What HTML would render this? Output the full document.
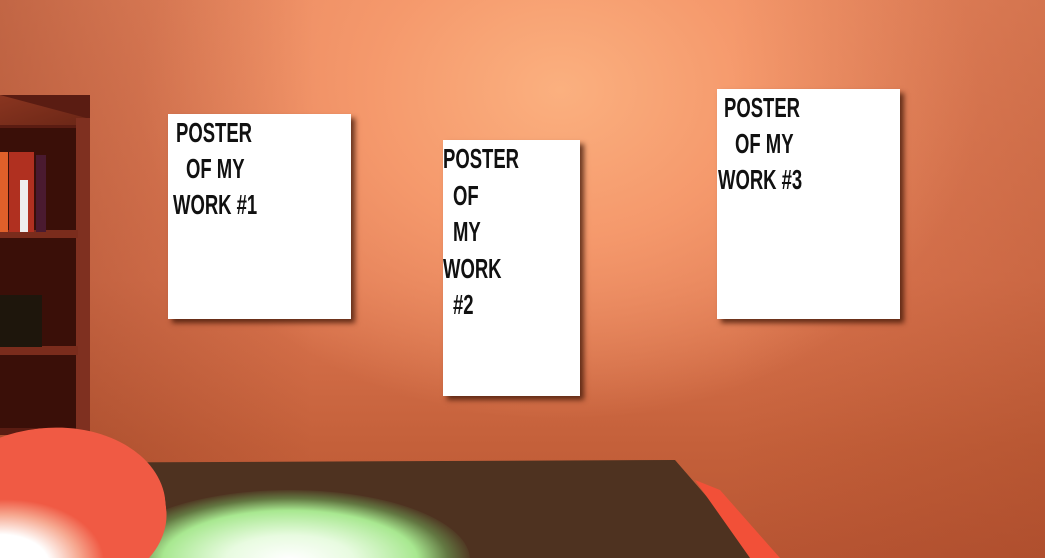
<!DOCTYPE html>
<html><head><style>
html,body{margin:0;padding:0;width:1045px;height:558px;overflow:hidden}
#w{position:relative;width:1045px;height:558px;overflow:hidden;
background:
radial-gradient(ellipse 420px 330px at 560px 90px,#fbb07f 0%,#f5996c 45%,rgba(240,140,95,0) 100%),
linear-gradient(180deg,#e9875f 0%,#dc7650 50%,#c4603a 80%,#b85533 100%);}
.shade{position:absolute;inset:0;background:linear-gradient(90deg,rgba(120,40,20,.35) 0%,rgba(120,40,20,0) 30%,rgba(0,0,0,0) 70%,rgba(150,60,30,.25) 100%)}
.p{position:absolute;background:#fff;box-shadow:4px 4px 5px rgba(60,20,5,.75)}
.t{position:absolute;font:bold 28px/28px "Liberation Sans",sans-serif;color:#111;transform:scaleX(.66);transform-origin:0 0;white-space:nowrap}
</style></head><body><div id="w">
<div class="shade"></div>
<div style="position:absolute;left:0;top:95px;width:90px;height:340px;background:#5a1c12"></div>
<div style="position:absolute;left:0;top:95px;width:90px;height:30px;background:linear-gradient(160deg,#8a3520,#6a2616);clip-path:polygon(0 0,100% 80%,100% 100%,0 100%)"></div>
<div style="position:absolute;left:76px;top:118px;width:14px;height:317px;background:#7f3020"></div>
<div style="position:absolute;left:0;top:128px;width:76px;height:300px;background:#3a0f08"></div>
<div style="position:absolute;left:0;top:230px;width:78px;height:8px;background:#7a2c1c"></div>
<div style="position:absolute;left:0;top:346px;width:78px;height:9px;background:#7a2c1c"></div>
<div style="position:absolute;left:0;top:152px;width:8px;height:80px;background:#e0602a"></div>
<div style="position:absolute;left:9px;top:152px;width:25px;height:80px;background:#b03020"></div>
<div style="position:absolute;left:20px;top:180px;width:8px;height:52px;background:#eee"></div>
<div style="position:absolute;left:36px;top:155px;width:10px;height:77px;background:#4a1a30"></div>
<div style="position:absolute;left:0;top:295px;width:42px;height:52px;background:#1e160c"></div>
<div style="position:absolute;left:0;top:460px;width:780px;height:98px;background:#4e3220;clip-path:polygon(0 3px,675px 0,760px 98px,0 98px)"></div>
<div style="position:absolute;left:690px;top:480px;width:90px;height:78px;background:#f25038;clip-path:polygon(5px 0,30px 10px,90px 78px,60px 78px)"></div>
<div style="position:absolute;left:110px;top:490px;width:360px;height:140px;border-radius:50%;background:radial-gradient(ellipse at 50% 50%,#ffffff 0%,#e8fbe0 25%,#a8e890 50%,rgba(120,190,100,.5) 62%,rgba(78,50,32,0) 72%)"></div>
<div style="position:absolute;left:-70px;top:428px;width:236px;height:170px;border-radius:50% 50% 45% 40%;background:radial-gradient(ellipse 110px 70px at 25% 80%,#fff 0%,#fff 50%,#f6a890 78%,rgba(240,96,74,0) 100%),#f05a44;transform:rotate(-6deg)"></div>
<div class="p" style="left:168px;top:114px;width:183px;height:205px"></div>
<div class="p" style="left:443px;top:140px;width:137px;height:256px"></div>
<div class="p" style="left:717px;top:89px;width:183px;height:230px"></div>
<div class="t" style="left:176px;top:119px">POSTER</div>
<div class="t" style="left:186px;top:155px">OF MY</div>
<div class="t" style="left:173px;top:191px">WORK #1</div>
<div class="t" style="left:443px;top:145px">POSTER</div>
<div class="t" style="left:453px;top:182px">OF</div>
<div class="t" style="left:453px;top:218px">MY</div>
<div class="t" style="left:443px;top:255px">WORK</div>
<div class="t" style="left:453px;top:291px">#2</div>
<div class="t" style="left:724px;top:94px">POSTER</div>
<div class="t" style="left:735px;top:130px">OF MY</div>
<div class="t" style="left:718px;top:166px">WORK #3</div>
</div></body></html>
